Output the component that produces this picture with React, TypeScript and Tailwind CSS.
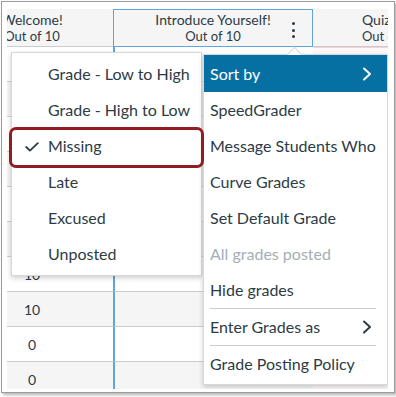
import React from "react";

const rows = ["10", "10", "10", "10", "10", "10", "10", "10", "0", "0"];

function Chevron({ color }: { color: string }) {
  return (
    <svg width="10" height="14" viewBox="0 0 10 14" fill="none">
      <polyline points="2,1.5 8,7 2,12.5" stroke={color} strokeWidth="2" strokeLinecap="round" strokeLinejoin="round" />
    </svg>
  );
}

export default function App() {
  const leftItems = ["Grade - Low to High", "Grade - High to Low", "Missing", "Late", "Excused", "Unposted"];
  return (
    <div
      className="w-[396px] h-[397px] bg-white pl-[1px] pt-[1px] text-[#2d3b45]"
      style={{ fontFamily: "Lato, 'Open Sans', sans-serif" }}
    >
      <div className="w-[394px] h-[392px] border border-[#9c9c9c] bg-white pl-[5px] pt-[7px] pr-[6px] pb-[3px] shadow-[2px_2px_3px_rgba(0,0,0,0.3)]">
        <div className="relative w-[381px] h-[380px] overflow-hidden bg-white">
          {/* grid */}
          <div className="flex flex-col ml-[-56px] w-[520px]">
            {/* header */}
            <div className="flex h-[38px]">
              <div className="w-[162px] shrink-0 bg-[#f5f5f5] border-b border-[#c7cdd1] flex flex-col items-center justify-center">
                <div className="text-[14px] leading-[17px]">Welcome!</div>
                <div className="text-[13px] leading-[17px]">Out of 10</div>
              </div>
              <div className="relative w-[200px] shrink-0 bg-[#f5f5f5] border border-[#5fa6dc] flex flex-col items-center justify-center">
                <div className="text-[14px] leading-[17px]">Introduce Yourself!</div>
                <div className="text-[13px] leading-[17px]">Out of 10</div>
                <div className="absolute left-[178px] top-[12px] flex flex-col gap-[3.5px]">
                  <span className="w-[3px] h-[3px] rounded-full bg-[#2d3b45]" />
                  <span className="w-[3px] h-[3px] rounded-full bg-[#2d3b45]" />
                  <span className="w-[3px] h-[3px] rounded-full bg-[#2d3b45]" />
                </div>
              </div>
              <div className="w-[158px] shrink-0 bg-[#f5f5f5] border-b border-[#c7cdd1] flex flex-col justify-center pl-[49px]">
                <div className="text-[14px] leading-[17px]">Quiz 1</div>
                <div className="text-[13px] leading-[17px]">Out of 10</div>
              </div>
            </div>
            {/* body rows */}
            {rows.map((v, i) => (
              <div key={i} className="flex h-[35px]">
                <div
                  className={`w-[162px] shrink-0 border-b border-[#c7cdd1] flex items-center justify-center text-[14px] ${
                    i % 2 === 1 ? "bg-[#f5f5f5]" : "bg-white"
                  }`}
                >
                  {v}
                </div>
                <div
                  className={`w-[200px] shrink-0 border-b border-[#c7cdd1] border-l-2 border-l-[#5fa6dc] ${
                    i % 2 === 1 ? "bg-[#f5f5f5]" : "bg-white"
                  }`}
                />
                <div className="w-[158px] shrink-0 border-b border-[#f3c9c9] border-t border-t-[#f6d3d3] bg-[#fff7f7]" />
              </div>
            ))}
          </div>

          {/* Left submenu */}
          <div className="absolute left-[4px] top-[43px] w-[191px] h-[224px] bg-white border border-[#d5d9dc] shadow-[0_2px_5px_rgba(0,0,0,0.2)] pt-[3px]">
            {leftItems.map((t) => (
              <div key={t} className="relative h-[36px] flex items-center pl-[36px] text-[16px]">
                {t === "Missing" && (
                  <svg className="absolute left-[13px] top-[14px]" width="14" height="10" viewBox="0 0 14 10" fill="none">
                    <polyline points="1.2,5 5,8.6 12.8,1.2" stroke="#2d3b45" strokeWidth="1.8" strokeLinecap="round" strokeLinejoin="round" />
                  </svg>
                )}
                {t}
              </div>
            ))}
          </div>

          {/* Right menu */}
          <div className="absolute left-[196px] top-[45px] w-[185px] h-[331px] bg-white border border-[#d5d9dc] shadow-[0_2px_5px_rgba(0,0,0,0.2)]">
            <div className="absolute left-[85px] top-[-6px] w-[11px] h-[11px] rotate-45 bg-white border-l border-t border-[#d5d9dc]" />
            <div className="relative h-[37px] bg-[#0770a3] text-white flex items-center justify-between pl-[6px] pr-[15px] text-[16px]">
              <span>Sort by</span>
              <Chevron color="#ffffff" />
            </div>
            <div className="h-[36px] flex items-center pl-[6px] text-[16px]">SpeedGrader</div>
            <div className="h-[36px] flex items-center pl-[6px] text-[16px] whitespace-nowrap">Message Students Who</div>
            <div className="h-[36px] flex items-center pl-[6px] text-[16px]">Curve Grades</div>
            <div className="h-[36px] flex items-center pl-[6px] text-[16px]">Set Default Grade</div>
            <div className="h-[36px] flex items-center pl-[6px] text-[16px] text-[#a5afb5]">All grades posted</div>
            <div className="h-[36px] flex items-center pl-[6px] text-[16px]">Hide grades</div>
            <div className="ml-[6px] mr-[11px] h-px bg-[#c7cdd1]" />
            <div className="h-[36px] flex items-center justify-between pl-[6px] pr-[15px] text-[16px]">
              <span>Enter Grades as</span>
              <Chevron color="#2d3b45" />
            </div>
            <div className="ml-[6px] mr-[11px] h-px bg-[#c7cdd1]" />
            <div className="h-[36px] flex items-center pl-[6px] text-[16px]">Grade Posting Policy</div>
          </div>

          {/* Highlight box */}
          <div className="absolute left-[2px] top-[118px] w-[195px] h-[41px] border-[3px] border-[#921c24] rounded-[7px]" />
        </div>
      </div>
    </div>
  );
}
